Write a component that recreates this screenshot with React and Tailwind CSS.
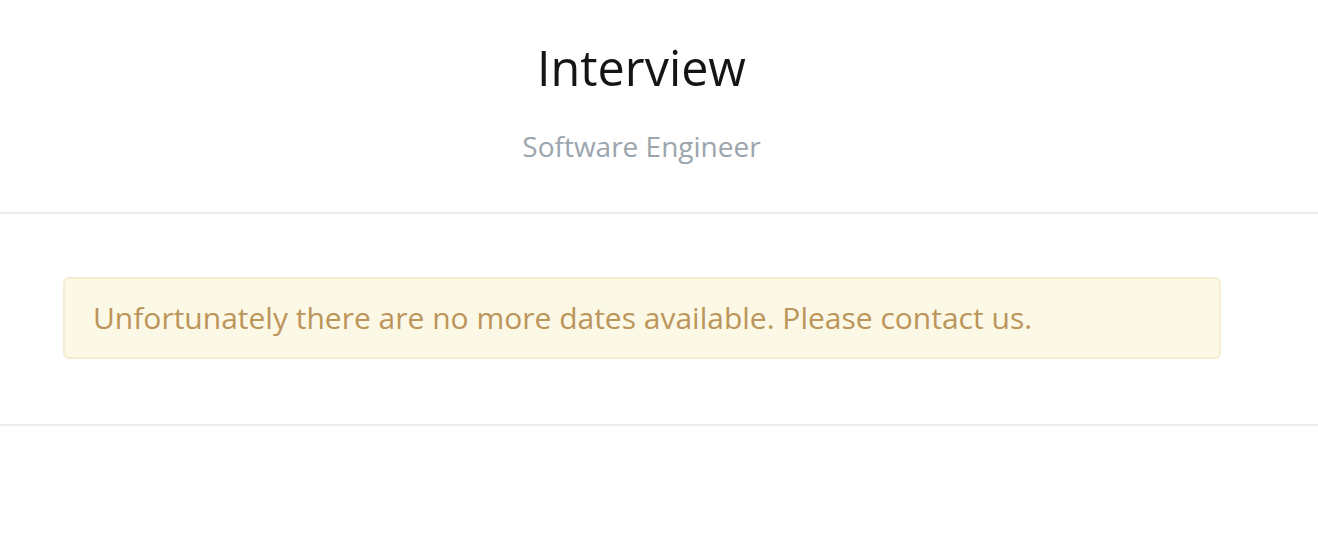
export default function App() {
  return (
    <div className="min-h-[552px] bg-white" style={{ fontFamily: '"Open Sans", sans-serif' }}>
      <div className="border-b-2 border-[#ececec]">
        <div className="flex flex-col items-center pt-[36px] pb-[48px] pr-[35px]">
          <h1 className="text-[48.5px] leading-[62px] text-[#151515] font-normal">Interview</h1>
          <p className="mt-[30px] text-[28px] leading-[36px] text-[#9ba5ad]">Software Engineer</p>
        </div>
      </div>
      <div className="pt-[63px] pb-[65px] pl-[63px] pr-[97px] border-b-2 border-[#ececec]">
        <div className="rounded-[6px] border-2 border-[#f6ecd2] bg-[#fcf8e6] px-[28px] py-[19px] text-[30px] leading-[40px] text-[#bb955a]">
          Unfortunately there are no more dates available. Please contact us.
        </div>
      </div>
    </div>
  );
}
